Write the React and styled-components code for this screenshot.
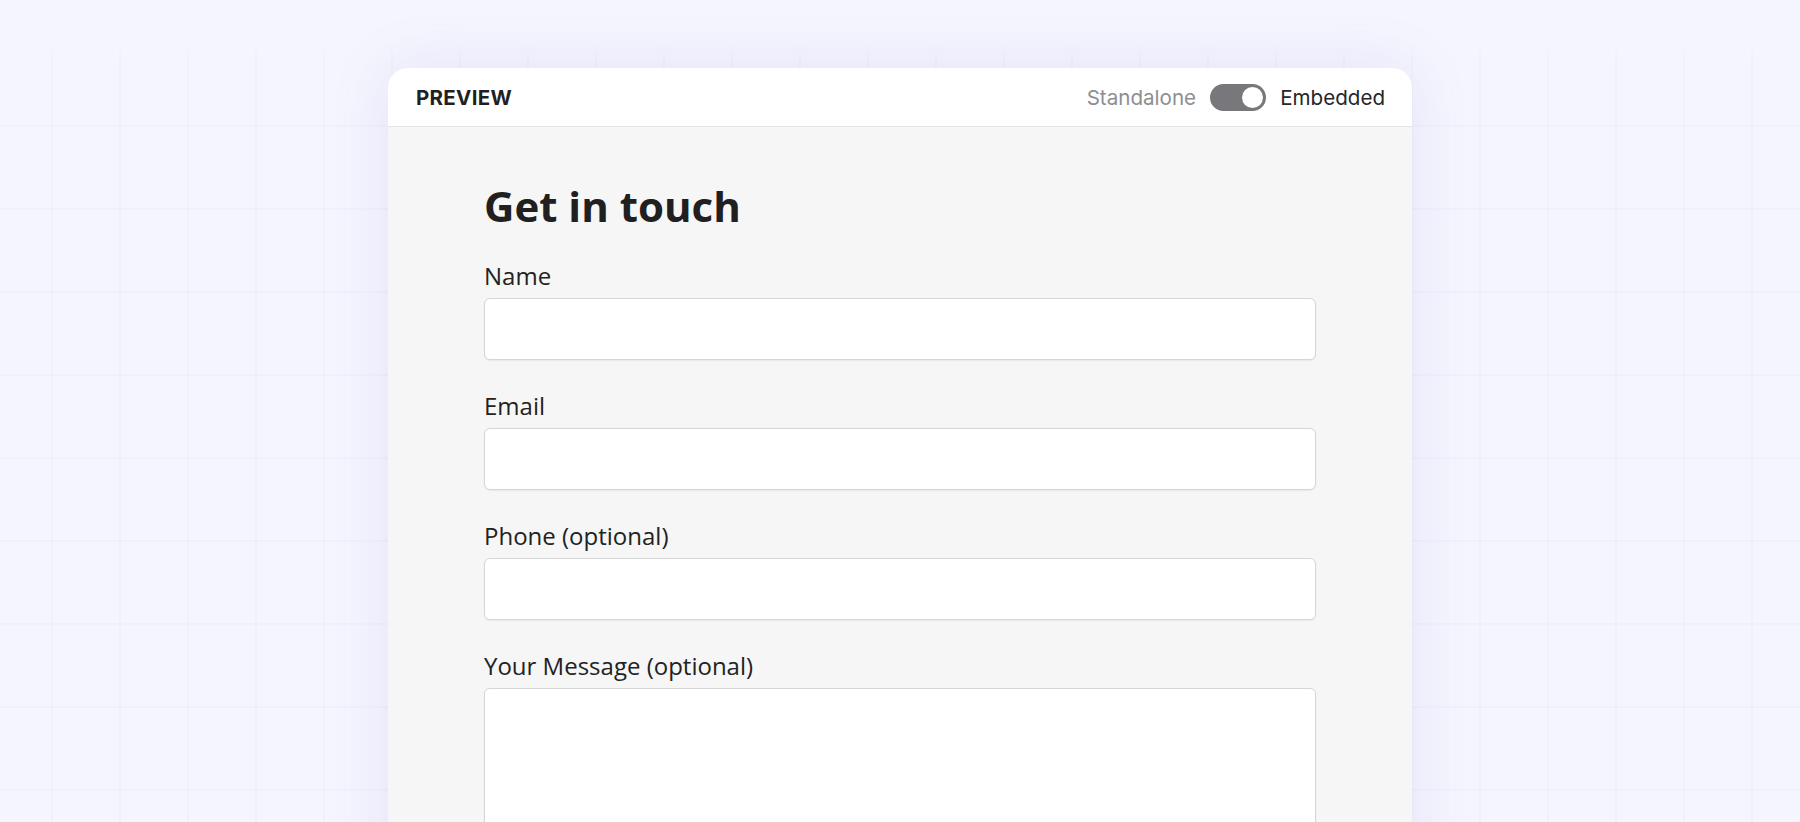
import React, { useState } from "react";
import styled, { createGlobalStyle } from "styled-components";

const GlobalStyle = createGlobalStyle`
  html, body {
    margin: 0;
    padding: 0;
    height: 100%;
  }
  body {
    background-color: #f5f5fe;
    font-family: "Open Sans", "Noto Sans", sans-serif;
    overflow: hidden;
  }
  * { box-sizing: border-box; }
`;

const Page = styled.div`
  height: 822px;
  overflow: hidden;
  background-color: #f5f5fe;
  background-image:
    linear-gradient(to bottom, #f5f5fe 0, #f5f5fe 44px, rgba(245, 245, 254, 0) 60px),
    linear-gradient(to right, rgba(215, 215, 238, 0.16) 2px, transparent 2px),
    linear-gradient(to bottom, rgba(215, 215, 238, 0.16) 2px, transparent 2px);
  background-size: 100% 100%, 68px 83px, 68px 83px;
  background-repeat: no-repeat, repeat, repeat;
  background-position: 0 0, 51px 125px, 51px 125px;
  padding-top: 68px;
`;

const Card = styled.section`
  width: 1024px;
  margin: 0 auto;
  border-radius: 20px 20px 0 0;
  background: #f6f6f6;
  box-shadow: 0 0 60px rgba(110, 110, 220, 0.13);
  overflow: hidden;
`;

const Header = styled.header`
  height: 59px;
  background: #ffffff;
  border-bottom: 1px solid #e4e4e6;
  display: flex;
  align-items: center;
  justify-content: space-between;
  padding: 0 27px 0 28px;
`;

const Title = styled.h2`
  margin: 0;
  font-family: Inter, "Liberation Sans", sans-serif;
  font-size: 20.5px;
  font-weight: 700;
  letter-spacing: 0.3px;
  color: #1f1f24;
`;

const ModeSwitch = styled.div`
  display: flex;
  align-items: center;
  gap: 14px;
`;

const ModeLabel = styled.span`
  font-family: Inter, "Liberation Sans", sans-serif;
  font-size: 20.6px;
  font-weight: 400;
  color: ${(p) => (p.$active ? "#26262b" : "#8e8e93")};
`;

const Track = styled.button`
  width: 56px;
  height: 27px;
  border: none;
  border-radius: 14px;
  background: #77777c;
  padding: 3px;
  display: flex;
  justify-content: ${(p) => (p.$on ? "flex-end" : "flex-start")};
  align-items: center;
  cursor: pointer;
`;

const Knob = styled.span`
  width: 21px;
  height: 21px;
  border-radius: 50%;
  background: #ffffff;
  display: block;
`;

const Body = styled.div`
  padding-top: 54px;
  padding-bottom: 60px;
`;

const Form = styled.form`
  max-width: 832px;
  margin: 0 auto;
  display: flex;
  flex-direction: column;
`;

const Heading = styled.h1`
  margin: 0 0 28px;
  font-family: "Open Sans", "Noto Sans", sans-serif;
  font-size: 42px;
  font-weight: 700;
  line-height: 50px;
  color: #202020;
`;

const Field = styled.label`
  display: flex;
  flex-direction: column;
  gap: 5px;
  margin-bottom: 29px;
`;

const FieldLabel = styled.span`
  font-size: 24px;
  line-height: 34px;
  font-weight: 400;
  color: #222222;
`;

const Input = styled.input`
  height: 62px;
  width: 100%;
  border: 1px solid #d6d6d6;
  border-radius: 6px;
  background: #ffffff;
  box-shadow: 0 1px 2px rgba(0, 0, 0, 0.06);
  font-family: inherit;
  font-size: 22px;
  padding: 0 16px;
  outline: none;
`;

const TextArea = styled.textarea`
  height: 200px;
  width: 100%;
  border: 1px solid #d6d6d6;
  border-radius: 6px;
  background: #ffffff;
  box-shadow: 0 1px 2px rgba(0, 0, 0, 0.06);
  font-family: inherit;
  font-size: 22px;
  padding: 14px 16px;
  resize: none;
  outline: none;
`;

const fields = [
  { id: "name", label: "Name", type: "text" },
  { id: "email", label: "Email", type: "email" },
  { id: "phone", label: "Phone (optional)", type: "tel" },
];

export default function App() {
  const [embedded, setEmbedded] = useState(true);
  return (
    <>
      <GlobalStyle />
      <Page>
        <Card>
          <Header>
            <Title>PREVIEW</Title>
            <ModeSwitch>
              <ModeLabel $active={!embedded}>Standalone</ModeLabel>
              <Track
                type="button"
                $on={embedded}
                aria-label="Toggle embedded"
                onClick={() => setEmbedded((v) => !v)}
              >
                <Knob />
              </Track>
              <ModeLabel $active={embedded}>Embedded</ModeLabel>
            </ModeSwitch>
          </Header>
          <Body>
            <Form onSubmit={(e) => e.preventDefault()}>
              <Heading>Get in touch</Heading>
              {fields.map((f) => (
                <Field key={f.id}>
                  <FieldLabel>{f.label}</FieldLabel>
                  <Input type={f.type} name={f.id} />
                </Field>
              ))}
              <Field>
                <FieldLabel>Your Message (optional)</FieldLabel>
                <TextArea name="message" />
              </Field>
            </Form>
          </Body>
        </Card>
      </Page>
    </>
  );
}
